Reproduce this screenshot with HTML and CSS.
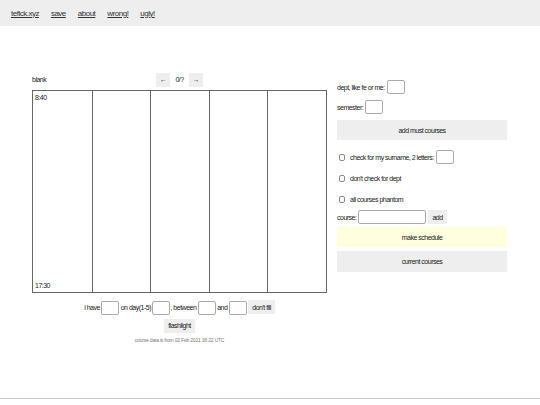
FILE: index.html
```html
<!DOCTYPE html>
<html lang="en">
<head>
    <meta charset="UTF-8">
    <title>tefick.xyz</title>
    <link rel="stylesheet" href="styles.css">
</head>
<body>
    <div class="topbar">
        <a href="#">tefick.xyz</a>
        <a href="#">save</a>
        <a href="#">about</a>
        <a href="#">wrong!</a>
        <a href="#">ugly!</a>
    </div>

    <div class="main">
        <div class="left">
            <div class="schedule-head">
                <span class="label">blank</span>
                <div class="nav">
                    <button class="small">&larr;</button>
                    <span>0/?</span>
                    <button class="small">&rarr;</button>
                </div>
            </div>
            <div class="grid">
                <div class="day"><span class="start">8:40</span><span class="end">17:30</span></div>
                <div class="day"></div>
                <div class="day"></div>
                <div class="day"></div>
                <div class="day"></div>
            </div>
            <div class="busy">
                i have <input type="text"> on day(1-5) <input type="text">, between <input type="text"> and <input type="text">
                <button class="small">don't fill</button>
            </div>
            <div class="center"><button class="small">flashlight</button></div>
            <div class="stamp">course data is from 02 Feb 2021 16:22 UTC</div>
        </div>

        <div class="right">
            <div class="row">dept, like fe or me: <input type="text"></div>
            <div class="row">semester: <input type="text"></div>
            <button class="wide">add must courses</button>
            <label class="row check"><input type="checkbox"> check for my surname, 2 letters: <input type="text"></label>
            <label class="row check"><input type="checkbox"> don't check for dept</label>
            <label class="row check"><input type="checkbox"> all courses phantom</label>
            <div class="row course-row">course: <input type="text" class="course"> <button class="small">add</button></div>
            <button class="wide make">make schedule</button>
            <button class="wide">current courses</button>
        </div>
    </div>

    <div class="footer"></div>
</body>
</html>
```

FILE: styles.css
```css
body {
    margin: 0;
    font-family: "Liberation Sans", Arial, sans-serif;
    font-size: 7px;
    letter-spacing: -0.5px;
    color: #222;
    background: #fff;
    height: 405px;
    position: relative;
}

.topbar {
    background: #eeeeee;
    height: 26px;
    display: flex;
    align-items: center;
    gap: 12px;
    padding-left: 11px;
    font-size: 8px;
    letter-spacing: -0.5px;
}

.topbar a {
    color: #333;
}

.main {
    display: flex;
    gap: 10px;
    padding: 47px 0 0 32px;
}

.left {
    width: 295px;
}

.schedule-head {
    height: 17px;
    position: relative;
    display: flex;
    align-items: center;
    justify-content: center;
}

.schedule-head .label {
    position: absolute;
    left: 0;
    top: 3px;
}

.nav {
    display: flex;
    align-items: center;
    gap: 5px;
    margin-top: -4px;
}

button {
    font-family: inherit;
    font-size: 7px;
    letter-spacing: -0.5px;
    color: #222;
    border: none;
    background: #eeeeee;
    cursor: pointer;
}

button.small {
    height: 14px;
    padding: 0 4px;
}

input[type="text"] {
    width: 14px;
    height: 10px;
    border: 1px solid #aaa;
    border-radius: 2px;
    padding: 1px;
    margin: 0;
    font-size: 7px;
    vertical-align: middle;
}

input[type="checkbox"] {
    appearance: none;
    width: 6px;
    height: 7px;
    border: 1px solid #888;
    border-radius: 2px;
    background: #fff;
}

.grid {
    display: grid;
    grid-template-columns: repeat(5, 1fr);
    height: 201px;
    border: 1px solid #666;
}

.day {
    border-left: 1px solid #666;
    position: relative;
}

.day:first-child {
    border-left: none;
}

.day .start {
    position: absolute;
    top: 3px;
    left: 2px;
}

.day .end {
    position: absolute;
    bottom: 3px;
    left: 2px;
}

.busy {
    text-align: center;
    margin-top: 7px;
    line-height: 14px;
}

.center {
    text-align: center;
    margin-top: 4px;
}

.stamp {
    text-align: center;
    font-size: 5px;
    letter-spacing: -0.2px;
    color: #777;
    margin-top: 4px;
}

.right {
    width: 170px;
    padding-top: 7px;
}

.row {
    display: flex;
    align-items: center;
    gap: 2px;
    height: 14px;
    margin-bottom: 6px;
}

.check {
    margin-bottom: 7px;
}

.check input[type="checkbox"] {
    margin: 0 3px 0 2px;
}

.course-row {
    margin-top: -3px;
    margin-bottom: 3px;
}

input.course {
    width: 64px !important;
}

button.wide {
    display: block;
    width: 170px;
    height: 20px;
    margin: 2px 0 10px;
}

button.make {
    background: #ffffdd;
    margin-bottom: 4px;
}

button.make + button.wide {
    height: 21px;
}

.footer {
    position: absolute;
    left: 0;
    right: 0;
    bottom: 6px;
    border-top: 1px solid #ccc;
}
```
